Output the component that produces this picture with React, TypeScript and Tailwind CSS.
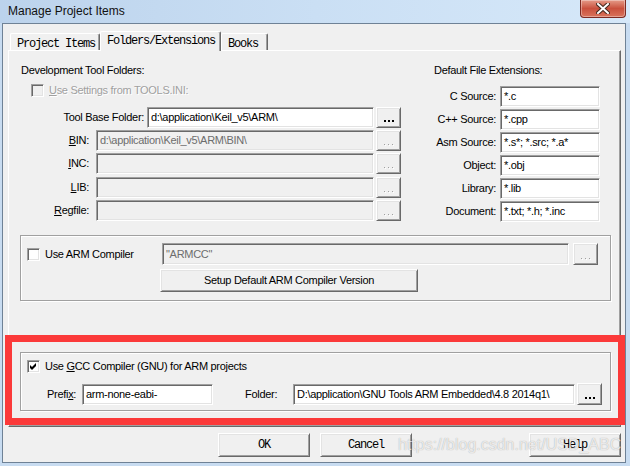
import React from "react";

const SANS = "font-['Liberation_Sans',Arial,sans-serif]";
const MONO = "font-['Liberation_Mono','Courier_New',monospace]";

// sunken 3D edge used by edits and check boxes
const SUNKEN =
  "border border-t-[#a0a0a0] border-l-[#a0a0a0] border-b-white border-r-white shadow-[inset_1px_1px_0_#696969,inset_-1px_-1px_0_#e3e3e3]";
// raised 3D edge used by push buttons
const RAISED =
  "border border-t-white border-l-white border-b-[#696969] border-r-[#696969] shadow-[inset_1px_1px_0_#e3e3e3,inset_-1px_-1px_0_#a0a0a0]";
// etched group frame
const ETCHED = "border border-[#a0a0a0] shadow-[inset_1px_1px_0_#fff,1px_1px_0_#fff]";

function Field({ w, value, disabled, h = "h-[21px]" }: { w: string; value?: string; disabled?: boolean; h?: string }) {
  return (
    <div
      className={`${w} ${h} ${SUNKEN} ${
        disabled ? "bg-[#f0f0f0] text-[#6d6d6d]" : "bg-white text-black"
      } shrink-0 pl-[3px] flex items-center whitespace-nowrap overflow-hidden leading-none`}
    >
      {value}
    </div>
  );
}

function Browse({ disabled, h = "h-[21px]", w = "w-[25px]" }: { disabled?: boolean; h?: string; w?: string }) {
  return (
    <div className={`${w} ${h} ${RAISED} shrink-0 flex items-end justify-center pb-[5px]`}>
      {disabled ? (
        <div className="flex gap-[3px]">
          <span className="w-[1px] h-[1px] bg-[#a0a0a0] shadow-[1px_1px_0_#fff]" />
          <span className="w-[1px] h-[1px] bg-[#a0a0a0] shadow-[1px_1px_0_#fff]" />
          <span className="w-[1px] h-[1px] bg-[#a0a0a0] shadow-[1px_1px_0_#fff]" />
        </div>
      ) : (
        <div className="flex gap-[2px]">
          <span className="w-[2px] h-[2px] bg-black" />
          <span className="w-[2px] h-[2px] bg-black" />
          <span className="w-[2px] h-[2px] bg-black" />
        </div>
      )}
    </div>
  );
}

function Check({ checked, disabled }: { checked?: boolean; disabled?: boolean }) {
  return (
    <div
      className={`w-[13px] h-[13px] shrink-0 ${SUNKEN} ${disabled ? "bg-[#f0f0f0]" : "bg-white"} flex items-center justify-center`}
    >
      {checked && (
        <svg width="7" height="7" viewBox="0 0 7 7">
          <polygon points="0,2 2,4 6,0 6,3 2,7 0,5" fill="#000" />
        </svg>
      )}
    </div>
  );
}

function PushButton({ label, w }: { label: string; w: string }) {
  return (
    <div className={`${w} h-[24px] ${RAISED} shrink-0 flex items-center justify-center ${MONO} text-[12px] tracking-[-1.2px]`}>
      {label}
    </div>
  );
}

function Tab({ label, w, active }: { label: string; w: string; active?: boolean }) {
  return (
    <div
      className={`${w} ${
        active ? "h-[20px] relative z-10 pt-[2px]" : "h-[17px] mb-[1px] pt-[3px]"
      } bg-[#f0f0f0] border-t border-l border-r border-t-white border-l-white border-r-[#696969] shadow-[inset_-1px_0_0_#a0a0a0] rounded-t-[2px] pl-[6px] ${MONO} text-[12px] tracking-[-1.2px] leading-[14px] whitespace-nowrap`}
    >
      {label}
    </div>
  );
}

const folderRows = [
  { key: "B", rest: "IN:", value: "d:\\application\\Keil_v5\\ARM\\BIN\\", mt: "mt-[2px]" },
  { key: "I", rest: "NC:", value: "", mt: "mt-[2px]" },
  { key: "L", rest: "IB:", value: "", mt: "mt-[3px]" },
  { key: "R", rest: "egfile:", value: "", mt: "mt-[2px]" },
];

const extRows = [
  { label: "C Source:", value: "*.c" },
  { label: "C++ Source:", value: "*.cpp" },
  { label: "Asm Source:", value: "*.s*; *.src; *.a*" },
  { label: "Object:", value: "*.obj" },
  { label: "Library:", value: "*.lib" },
  { label: "Document:", value: "*.txt; *.h; *.inc" },
];

export default function App() {
  return (
    <div className={`relative w-[630px] h-[466px] overflow-hidden bg-[#c8dcf1] ${SANS} text-[11px] tracking-[-0.3px] text-black`}>
      {/* title bar */}
      <div className="h-[23px] flex items-start bg-gradient-to-r from-[#bcd3ec] via-[#cadff4] to-[#d6e8f9]">
        <div className="pl-[8px] pt-[4px] text-[12px] tracking-normal leading-[14px] text-[#111]">Manage Project Items</div>
        <div className="ml-auto mr-[4px] w-[46px] h-[18px] rounded-b-[4px] border border-t-0 border-[#7c2a22] bg-gradient-to-b from-[#e49a88] via-[#c9503d] to-[#d9735c] shadow-[inset_0_0_0_1px_rgba(255,255,255,0.35)] flex items-center justify-center">
          <svg width="14" height="11" viewBox="0 0 14 11">
            <path d="M2 1 L12 10 M12 1 L2 10" stroke="#45291f" strokeWidth="4" strokeLinecap="square" />
            <path d="M2 1 L12 10 M12 1 L2 10" stroke="#fff" strokeWidth="2" strokeLinecap="square" />
          </svg>
        </div>
      </div>

      {/* client area */}
      <div className="ml-[2px] w-[624px] h-[440px] border border-[#6f8296] bg-[#f0f0f0] flex flex-col">
        {/* tabs */}
        <div className="mt-[7px] pl-[7px] h-[20px] flex items-end">
          <Tab label="Project Items" w="w-[90px]" />
          <Tab label="Folders/Extensions" w="w-[121px]" active />
          <Tab label="Books" w="w-[47px]" />
        </div>

        {/* tab page */}
        <div className="-mt-[1px] ml-[5px] w-[613px] h-[377px] border border-t-white border-l-white border-r-[#696969] border-b-[#696969] shadow-[inset_-1px_-1px_0_#a0a0a0] flex flex-col">
          <div className="flex">
            {/* folders */}
            <div className="w-[392px] flex flex-col">
              <div className="mt-[13px] pl-[12px] leading-[13px]">Development Tool Folders:</div>
              <div className="mt-[7px] pl-[22px] h-[13px] flex items-center gap-[5px]">
                <Check disabled />
                <span className="text-[#a0a0a0] [text-shadow:1px_1px_0_#fff]">
                  <span className="underline">U</span>se Settings from TOOLS.INI:
                </span>
              </div>
              <div className="mt-[10px] flex items-center">
                <div className="w-[135px] text-right">Tool Base Folder:</div>
                <div className="ml-[3px]">
                  <Field w="w-[227px]" value="d:\application\Keil_v5\ARM\" />
                </div>
                <div className="ml-[2px]">
                  <Browse />
                </div>
              </div>
              {folderRows.map((r) => (
                <div key={r.key} className={`${r.mt} flex items-center`}>
                  <div className="w-[80px] text-right">
                    <span className="underline">{r.key}</span>
                    {r.rest}
                  </div>
                  <div className="ml-[7px]">
                    <Field w="w-[278px]" value={r.value} disabled />
                  </div>
                  <div className="ml-[2px]">
                    <Browse disabled />
                  </div>
                </div>
              ))}
            </div>

            {/* extensions */}
            <div className="flex-1 flex flex-col">
              <div className="mt-[13px] pl-[33px] leading-[13px]">Default File Extensions:</div>
              <div className="mt-[9px] flex flex-col gap-[2px]">
                {extRows.map((r) => (
                  <div key={r.label} className="flex items-center">
                    <div className="w-[95px] text-right">{r.label}</div>
                    <div className="ml-[4px]">
                      <Field w="w-[100px]" value={r.value} />
                    </div>
                  </div>
                ))}
              </div>
            </div>
          </div>

          {/* ARM compiler */}
          <div className={`mt-[13px] ml-[11px] w-[591px] h-[66px] ${ETCHED} flex flex-col`}>
            <div className="mt-[7px] pl-[6px] flex items-center">
              <Check />
              <div className="ml-[5px] w-[117px]">Use ARM Compiler</div>
              <Field w="w-[407px]" h="h-[22px]" value={'"ARMCC"'} disabled />
              <div className="ml-[4px]">
                <Browse disabled h="h-[22px]" />
              </div>
            </div>
            <div className="mt-[4px] ml-[139px]">
              <div className={`w-[258px] h-[23px] ${RAISED} flex items-center justify-center`}>Setup Default ARM Compiler Version</div>
            </div>
          </div>

          {/* GCC compiler */}
          <div className={`mt-[51px] ml-[11px] w-[591px] h-[59px] ${ETCHED} flex flex-col`}>
            <div className="mt-[7px] pl-[6px] h-[13px] flex items-center">
              <Check checked />
              <div className="ml-[5px]">
                Use <span className="underline">G</span>CC Compiler (GNU) for ARM projects
              </div>
            </div>
            <div className="mt-[10px] pl-[26px] flex items-center">
              <div className="w-[35px]">
                Prefi<span className="underline">x</span>:
              </div>
              <Field w="w-[131px]" value="arm-none-eabi-" />
              <div className="ml-[32px] w-[48px]">Folder:</div>
              <Field w="w-[282px]" value="D:\application\GNU Tools ARM Embedded\4.8 2014q1\" />
              <div className="ml-[2px]">
                <Browse h="h-[22px]" />
              </div>
            </div>
          </div>
        </div>

        {/* dialog buttons */}
        <div className="mt-[6px] pl-[215px] flex">
          <PushButton label="OK" w="w-[92px]" />
          <div className="ml-[10px]">
            <PushButton label="Cancel" w="w-[92px]" />
          </div>
          <div className="ml-[117px]">
            <PushButton label="Help" w="w-[92px]" />
          </div>
        </div>
      </div>

      {/* red annotation frame */}
      <div className="absolute left-[5px] top-[335px] w-[620px] h-[90px] border-[7px] border-[#fb3a3a]" />

      {/* watermark */}
      <div className="absolute left-[398px] top-[436px] text-[16px] tracking-normal leading-[18px] text-white/75 [text-shadow:0_0_1px_rgba(0,0,0,0.35)] whitespace-nowrap">
        https://blog.csdn.net/USD_ABC
      </div>
    </div>
  );
}
